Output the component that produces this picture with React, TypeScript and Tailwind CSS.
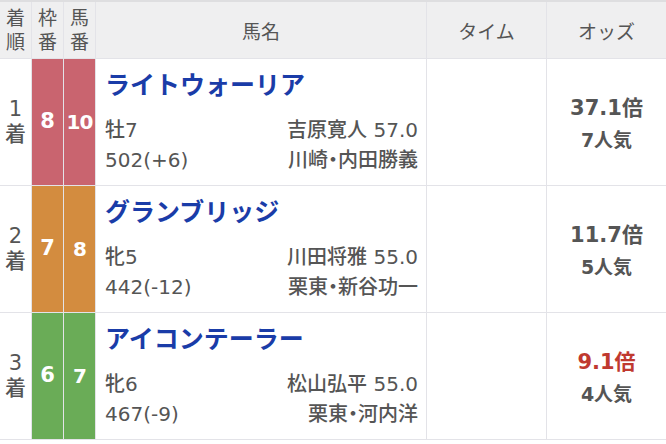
import React from 'react';

type Horse = {
  rank: number;
  waku: number;
  umaban: number;
  name: string;
  sexAge: string;
  weight: string;
  jockey: string;
  trainer: string;
  odds: string;
  pop: number;
  hot?: boolean;
};

const horses: Horse[] = [
  { rank: 1, waku: 8, umaban: 10, name: 'ライトウォーリア', sexAge: '牡7', weight: '502(+6)', jockey: '吉原寛人 57.0', trainer: '川崎・内田勝義', odds: '37.1', pop: 7 },
  { rank: 2, waku: 7, umaban: 8, name: 'グランブリッジ', sexAge: '牝5', weight: '442(-12)', jockey: '川田将雅 55.0', trainer: '栗東・新谷功一', odds: '11.7', pop: 5 },
  { rank: 3, waku: 6, umaban: 7, name: 'アイコンテーラー', sexAge: '牝6', weight: '467(-9)', jockey: '松山弘平 55.0', trainer: '栗東・河内洋', odds: '9.1', pop: 4, hot: true },
];

const wakuColor: Record<number, string> = {
  6: 'bg-[#6aac57]',
  7: 'bg-[#d38c3f]',
  8: 'bg-[#c9646f]',
};

export default function App() {
  return (
    <div
      className="w-[666px] h-[444px] bg-white text-[#555555] overflow-hidden"
      style={{ fontFamily: '"DejaVu Sans", "Noto Sans CJK JP", sans-serif' }}
    >
      {/* header */}
      <div className="flex h-[59px] bg-[#efeff0] border-t-2 border-[#dedee0] border-b border-b-[#e3e3e8] text-[19px] leading-[24px]">
        <div className="w-[32px] border-r border-[#e3e3e8] flex flex-col items-center justify-center">
          <span>着</span>
          <span>順</span>
        </div>
        <div className="w-[32px] border-r border-[#e3e3e8] flex flex-col items-center justify-center">
          <span>枠</span>
          <span>番</span>
        </div>
        <div className="w-[32px] border-r border-[#e3e3e8] flex flex-col items-center justify-center">
          <span>馬</span>
          <span>番</span>
        </div>
        <div className="w-[331px] border-r border-[#e3e3e8] flex items-center justify-center pt-[3px]">馬名</div>
        <div className="w-[120px] border-r border-[#e3e3e8] flex items-center justify-center pt-[3px]">タイム</div>
        <div className="flex-1 flex items-center justify-center pt-[3px]">オッズ</div>
      </div>

      {horses.map((h) => (
        <div key={h.rank} className="flex h-[127px] border-b border-[#e3e3e8]">
          <div className="w-[32px] border-r border-[#e3e3e8] flex flex-col items-center justify-center text-[21px] leading-[25px] font-medium">
            <span>{h.rank}</span>
            <span>着</span>
          </div>
          <div className={`w-[32px] border-r border-[#e3e3e8] flex items-center justify-center text-white font-bold text-[21px] ${wakuColor[h.waku]}`}>
            {h.waku}
          </div>
          <div className={`w-[32px] border-r border-[#e3e3e8] flex items-center justify-center text-white font-bold text-[20px] tracking-[-1px] ${wakuColor[h.waku]}`}>
            {h.umaban}
          </div>
          <div className="w-[331px] border-r border-[#e3e3e8] pl-[9px] pr-[8px] pt-[10px]">
            <div className="text-[25px] leading-[34px] font-bold text-[#1a3ca8]">{h.name}</div>
            <div className="mt-[12px] flex justify-between text-[20px] leading-[30px] font-medium">
              <span>{h.sexAge}</span>
              <span>{h.jockey}</span>
            </div>
            <div className="flex justify-between text-[20px] leading-[30px] font-medium">
              <span>{h.weight}</span>
              <span className="[font-feature-settings:'palt']">{h.trainer}</span>
            </div>
          </div>
          <div className="w-[120px] border-r border-[#e3e3e8]"></div>
          <div className="flex-1 flex flex-col items-center justify-center font-bold pt-[2px]">
            <span className={`text-[21px] leading-[34px] ${h.hot ? 'text-[#c0392f]' : ''}`}>{h.odds}倍</span>
            <span className="text-[19px] leading-[30px]">{h.pop}人気</span>
          </div>
        </div>
      ))}
    </div>
  );
}
